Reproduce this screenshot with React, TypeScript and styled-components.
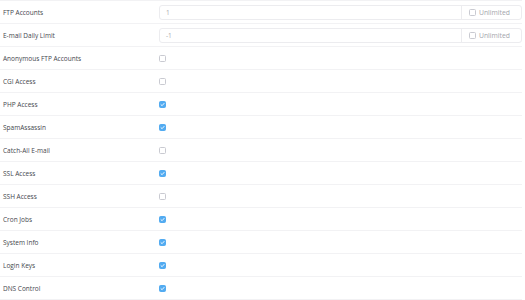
import React from "react";
import styled, { createGlobalStyle } from "styled-components";

const GlobalStyle = createGlobalStyle`
  body {
    margin: 0;
    background: #ffffff;
    font-family: "Open Sans", "DejaVu Sans", sans-serif;
  }
`;

interface IRowItem {
  label: string;
  kind: "input" | "check";
  value?: string;
  checked?: boolean;
}

const rows: IRowItem[] = [
  { label: "FTP Accounts", kind: "input", value: "1" },
  { label: "E-mail Daily Limit", kind: "input", value: "-1" },
  { label: "Anonymous FTP Accounts", kind: "check", checked: false },
  { label: "CGI Access", kind: "check", checked: false },
  { label: "PHP Access", kind: "check", checked: true },
  { label: "SpamAssassin", kind: "check", checked: true },
  { label: "Catch-All E-mail", kind: "check", checked: false },
  { label: "SSL Access", kind: "check", checked: true },
  { label: "SSH Access", kind: "check", checked: false },
  { label: "Cron Jobs", kind: "check", checked: true },
  { label: "System Info", kind: "check", checked: true },
  { label: "Login Keys", kind: "check", checked: true },
  { label: "DNS Control", kind: "check", checked: true },
];

const Table = styled.div`
  width: 522px;
  border-top: 1px solid #f2f2f4;
`;

const Row = styled.div`
  display: flex;
  align-items: center;
  height: 22px;
  border-bottom: 1px solid #f2f2f4;
`;

const Label = styled.div`
  width: 156px;
  padding-left: 3px;
  font-size: 6.5px;
  color: #44464c;
  white-space: nowrap;
`;

const InputGroup = styled.div`
  flex: 1;
  display: flex;
  height: 15px;
  border: 1px solid #ececef;
  border-radius: 3px;
  box-sizing: border-box;
`;

const Field = styled.div`
  flex: 1;
  display: flex;
  align-items: center;
  padding-left: 6px;
  font-size: 6.5px;
  color: #a8a9ae;
`;

const Addon = styled.div`
  width: 52px;
  display: flex;
  align-items: center;
  gap: 3px;
  padding-left: 7px;
  border-left: 1px solid #ececef;
  font-size: 6.8px;
  color: #a3a5ab;
`;

const Box = styled.span<{ checked: boolean }>`
  display: inline-flex;
  align-items: center;
  justify-content: center;
  width: 7px;
  height: 7px;
  border-radius: 1.5px;
  box-sizing: border-box;
  border: 1px solid ${({ checked }) => (checked ? "#52abf1" : "#c9cad1")};
  background: ${({ checked }) => (checked ? "#52abf1" : "#ffffff")};
`;

function CheckBox({ checked }: { checked: boolean }) {
  return (
    <Box checked={checked}>
      {checked && (
        <svg width="5" height="5" viewBox="0 0 10 10">
          <path d="M2 5.3 L4.2 7.4 L8.2 2.8" fill="none" stroke="#ffffff" strokeWidth="1.8" strokeLinecap="round" strokeLinejoin="round" />
        </svg>
      )}
    </Box>
  );
}

export default function App() {
  return (
    <>
      <GlobalStyle />
      <Table>
        {rows.map((r) => (
          <Row key={r.label}>
            <Label>{r.label}</Label>
            {r.kind === "input" ? (
              <InputGroup>
                <Field>{r.value}</Field>
                <Addon>
                  <CheckBox checked={false} />
                  Unlimited
                </Addon>
              </InputGroup>
            ) : (
              <CheckBox checked={!!r.checked} />
            )}
          </Row>
        ))}
      </Table>
    </>
  );
}
